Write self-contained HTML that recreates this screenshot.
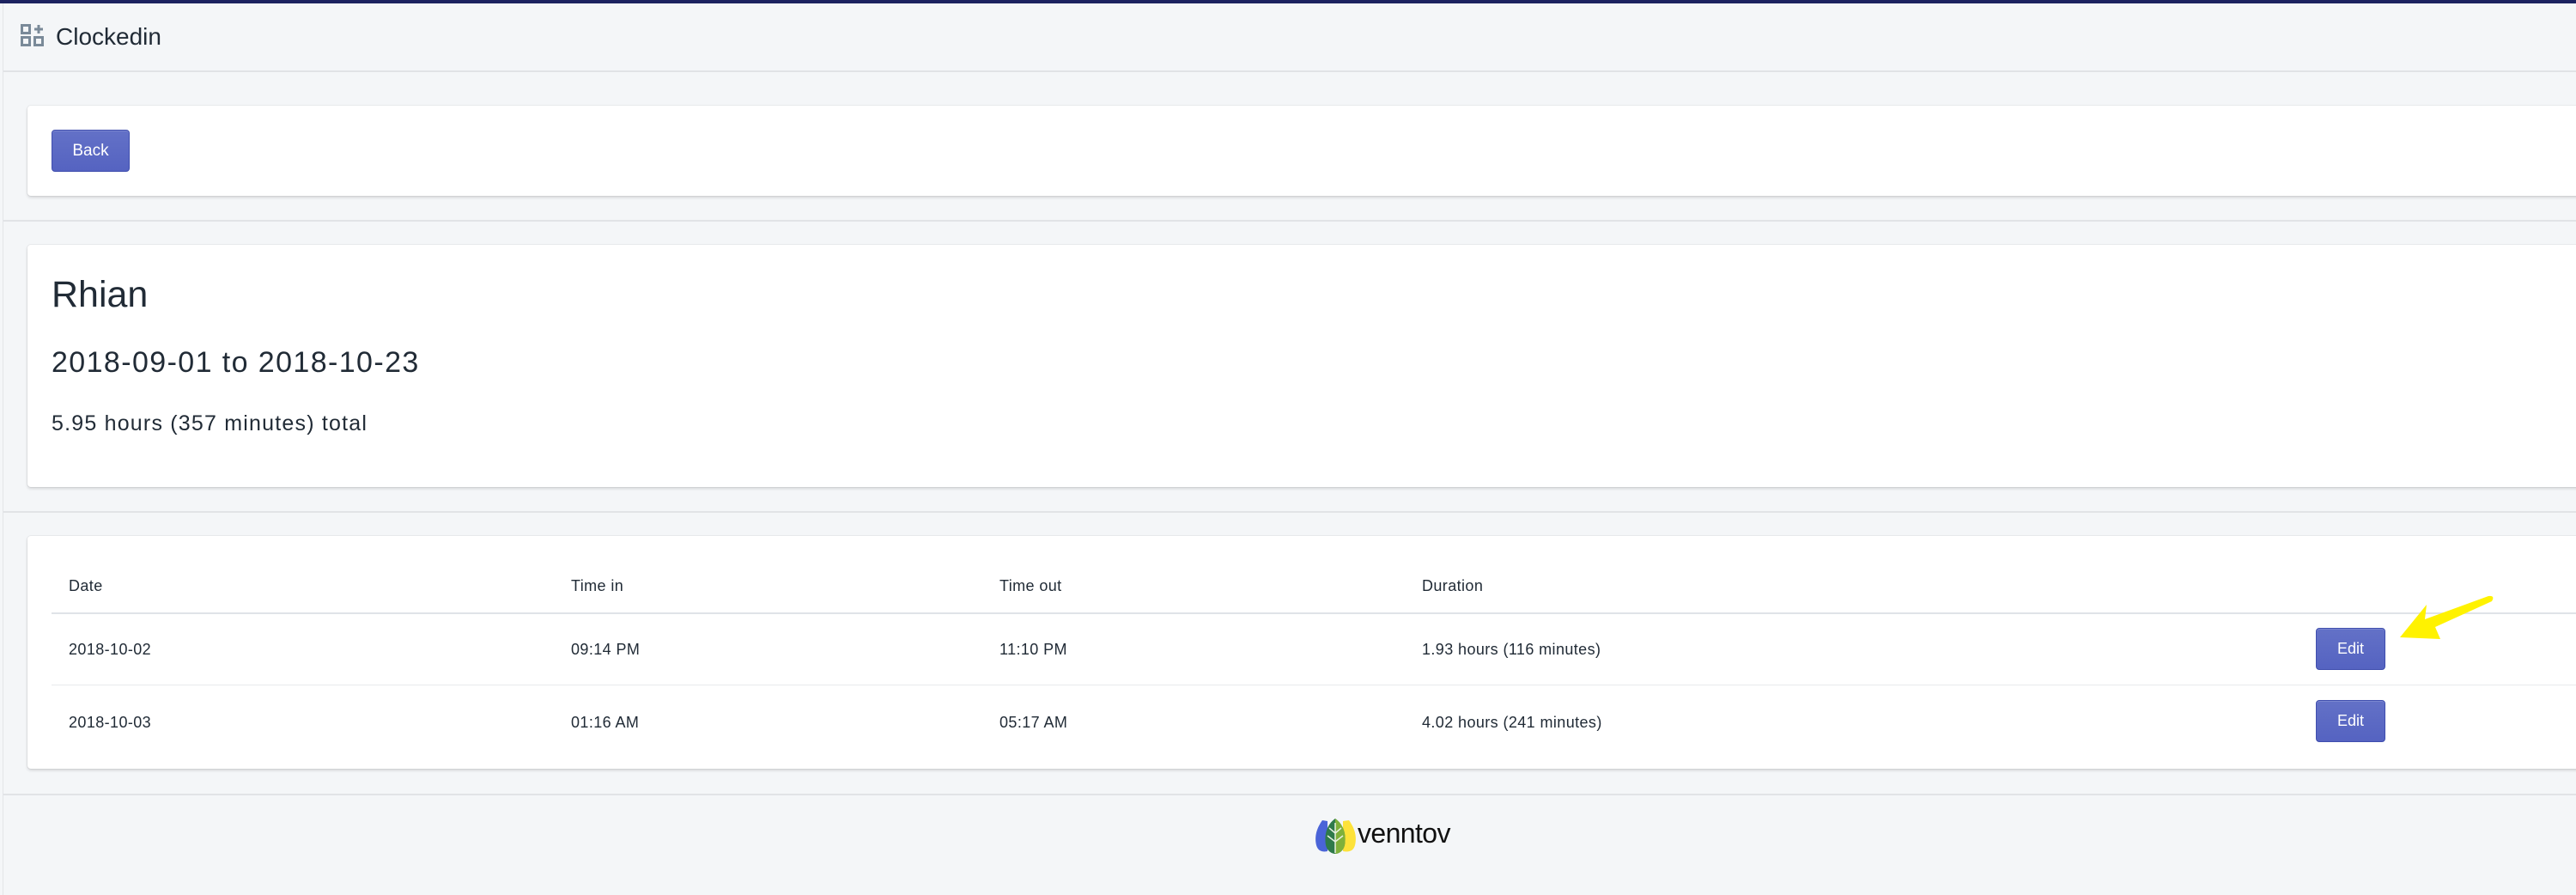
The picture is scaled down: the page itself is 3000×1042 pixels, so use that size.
<!DOCTYPE html>
<html><head><meta charset="utf-8"><style>
*{margin:0;padding:0;box-sizing:border-box}
html,body{width:3000px;height:1042px;overflow:hidden;background:#f4f6f8;font-family:"Liberation Sans",sans-serif;color:#212b36}
.top{position:absolute;left:0;top:0;width:3000px;height:4px;background:#1c2260}
.lb{position:absolute;left:3px;top:4px;width:1px;height:1038px;background:#e3e5e8}
.hline{position:absolute;left:4px;width:2996px;height:2px;background:#e1e3e6}
.card{position:absolute;left:32px;width:3000px;background:#fff;border-radius:4px;box-shadow:0 0 0 1px rgba(63,63,68,.06),0 2px 3px rgba(63,63,68,.18)}
.btn{position:absolute;background:linear-gradient(#6371c7,#5563c1);border:1px solid #3f4eae;border-radius:4px;color:#fff;font-size:19px;display:flex;align-items:center;justify-content:center;box-shadow:inset 0 1px 0 rgba(255,255,255,.15)}
.t{position:absolute;font-size:18px;color:#212b36;white-space:nowrap;letter-spacing:.4px}
</style></head><body>
<div class="top"></div>
<div class="lb"></div>
<svg style="position:absolute;left:24px;top:28px" width="27" height="26" viewBox="0 0 27 26">
<g fill="none" stroke="#7a8a99" stroke-width="3"><rect x="1.5" y="1.5" width="9" height="9"/><rect x="1.5" y="15.5" width="9" height="9"/><rect x="16.5" y="15.5" width="9" height="9"/></g>
<path d="M21 1v10M16 6h10" stroke="#7a8a99" stroke-width="3"/></svg>
<div style="position:absolute;left:65px;top:27px;font-size:28px;color:#212b36">Clockedin</div>
<div class="hline" style="top:82px"></div>
<div class="card" style="top:123px;height:105px"></div>
<div class="btn" style="left:60px;top:151px;width:91px;height:49px">Back</div>
<div class="hline" style="top:256px"></div>
<div class="card" style="top:285px;height:282px"></div>
<div style="position:absolute;left:60px;top:319px;font-size:43px">Rhian</div>
<div style="position:absolute;left:60px;top:403px;font-size:34px;letter-spacing:1.4px">2018-09-01 to 2018-10-23</div>
<div style="position:absolute;left:60px;top:479px;font-size:25px;letter-spacing:1.2px">5.95 hours (357 minutes) total</div>
<div class="hline" style="top:595px"></div>
<div class="card" style="top:624px;height:271px"></div>
<div style="position:absolute;left:60px;top:713px;width:2940px;height:2px;background:#dfe3e8"></div>
<div style="position:absolute;left:60px;top:797px;width:2940px;height:1px;background:#e8eaed"></div>
<div class="t" style="left:80px;top:672px">Date</div>
<div class="t" style="left:665px;top:672px">Time in</div>
<div class="t" style="left:1164px;top:672px">Time out</div>
<div class="t" style="left:1656px;top:672px">Duration</div>
<div class="t" style="left:80px;top:746px">2018-10-02</div>
<div class="t" style="left:665px;top:746px">09:14 PM</div>
<div class="t" style="left:1164px;top:746px">11:10 PM</div>
<div class="t" style="left:1656px;top:746px">1.93 hours (116 minutes)</div>
<div class="t" style="left:80px;top:831px">2018-10-03</div>
<div class="t" style="left:665px;top:831px">01:16 AM</div>
<div class="t" style="left:1164px;top:831px">05:17 AM</div>
<div class="t" style="left:1656px;top:831px">4.02 hours (241 minutes)</div>
<div class="btn" style="left:2697px;top:731px;width:81px;height:49px;font-size:18px">Edit</div>
<div class="btn" style="left:2697px;top:815px;width:81px;height:49px;font-size:18px">Edit</div>
<svg style="position:absolute;left:2790px;top:690px" width="120" height="60" viewBox="0 0 120 60">
<path d="M5 52 L36 14 L34 31 L108 4 Q116 3 112 10 L46 40 L52 54 Z" fill="#fff200"/></svg>
<div class="hline" style="top:924px"></div>
<svg style="position:absolute;left:1530px;top:952px" width="52" height="44" viewBox="0 0 52 44">
<path d="M10 3 C2 14 1 24 3 32 C5 40 12 40 16 39 L16 4 Z" fill="#4a64d8"/>
<path d="M41 3 C49 14 50 24 48 32 C46 40 39 40 34 39 L34 4 Z" fill="#fde23a"/>
<path d="M25 1 C15 8 12 20 14 32 C16 40 22 42 25 42 C28 42 34 40 36 32 C38 20 35 8 25 1 Z" fill="#2f7a4a"/>
<path d="M25 1 C35 8 38 20 36 32 C34 40 28 42 25 42 Z" fill="#7fb03a"/>
<path d="M25 6 L25 41 M25 18 L18 12 M25 18 L32 12 M25 28 L16 21 M25 28 L34 21" stroke="#e8f0e0" stroke-width="1.5" fill="none"/></svg>
<div style="position:absolute;left:1581px;top:952px;font-size:32px;color:#111;letter-spacing:-.6px">venntov</div>
</body></html>
